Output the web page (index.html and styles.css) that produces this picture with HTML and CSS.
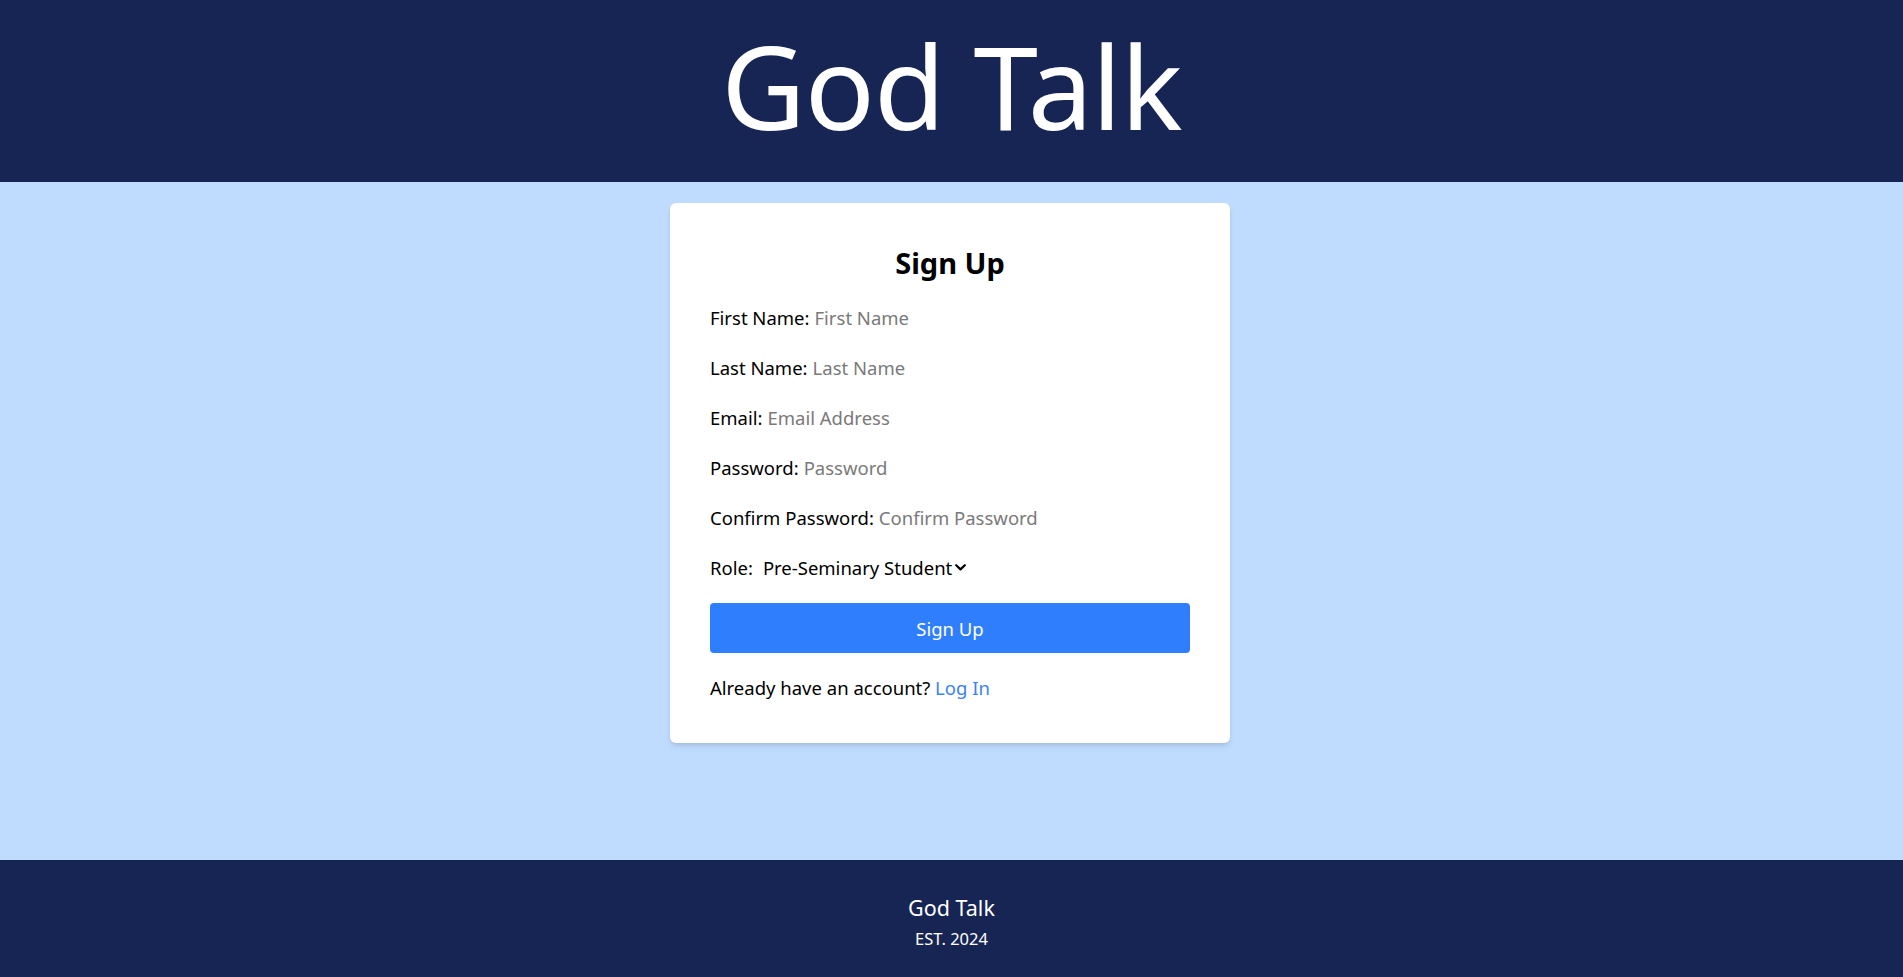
FILE: index.html
```html
<!DOCTYPE html>
<html lang="en">
<head>
    <meta charset="UTF-8">
    <meta name="viewport" content="width=device-width, initial-scale=1.0">
    <title>God Talk - Sign Up</title>
    <link rel="stylesheet" href="styles.css">
</head>
<body>

    <header class="site-header">
        <h1>God Talk</h1>
    </header>

    <main class="page">
        <form class="signup-card" onsubmit="return false;">
            <h2>Sign Up</h2>

            <label class="field"><span class="field-name">First Name:</span><input type="text" placeholder="First Name"></label>
            <label class="field"><span class="field-name">Last Name:</span><input type="text" placeholder="Last Name"></label>
            <label class="field"><span class="field-name">Email:</span><input type="email" placeholder="Email Address"></label>
            <label class="field"><span class="field-name">Password:</span><input type="password" placeholder="Password"></label>
            <label class="field"><span class="field-name">Confirm Password:</span><input type="password" placeholder="Confirm Password"></label>

            <label class="field role-field"><span class="field-name">Role:</span>
                <span class="select-wrap">
                    <select>
                        <option>Pre-Seminary Student</option>
                        <option>Seminary Student</option>
                        <option>Pastor</option>
                    </select>
                    <svg class="chevron" width="11" height="7" viewBox="0 0 11 7"><path d="M1.2 1.2 L5.5 5.4 L9.8 1.2" fill="none" stroke="#000" stroke-width="2.2" stroke-linecap="round" stroke-linejoin="round"/></svg>
                </span>
            </label>

            <button type="submit" class="signup-btn">Sign Up</button>

            <p class="login-line">Already have an account? <a href="#">Log In</a></p>
        </form>
    </main>

    <footer class="site-footer">
        <p class="footer-name">God Talk</p>
        <p class="footer-est">EST. 2024</p>
    </footer>

</body>
</html>
```

FILE: styles.css
```css
body {
    font-family: "Noto Sans", "Open Sans", sans-serif;
    margin: 0;
    min-height: 100vh;
    display: flex;
    flex-direction: column;
    color: #000;
}

.site-header {
    background-color: #172554;
    height: 182px;
    box-sizing: border-box;
    padding-top: 19px;
    text-align: center;
}

.site-header h1 {
    margin: 0;
    color: #fff;
    font-size: 116px;
    font-weight: 400;
    line-height: 132px;
    letter-spacing: -1px;
}

.page {
    flex: 1;
    background-color: #bfdbfe;
    display: flex;
    justify-content: center;
    align-items: flex-start;
    padding-top: 21px;
}

.signup-card {
    width: 560px;
    box-sizing: border-box;
    margin-right: 3px;
    background-color: #ffffff;
    padding: 40px;
    border-radius: 6px;
    box-shadow: 0 4px 6px -1px rgba(0, 0, 0, 0.1), 0 2px 4px -2px rgba(0, 0, 0, 0.1);
    display: flex;
    flex-direction: column;
    gap: 20px;
}

.signup-card h2 {
    margin: 0;
    text-align: center;
    font-size: 29px;
    font-weight: 700;
    line-height: 40px;
}

.field {
    font-size: 18.5px;
    line-height: 30px;
    height: 30px;
    display: flex;
    align-items: center;
}

.field-name {
    margin-right: 5px;
}

.field input {
    border: none;
    outline: none;
    padding: 0;
    margin: 0;
    font: inherit;
    flex: 1;
    min-width: 0;
    background: transparent;
}

.field input::placeholder {
    color: #7a7a7a;
}

.select-wrap {
    display: inline-flex;
    align-items: center;
    margin-left: 5px;
}

.select-wrap select {
    appearance: none;
    border: none;
    background: transparent;
    font: inherit;
    color: #000;
    padding: 0;
    margin: 0;
    outline: none;
}

.chevron {
    margin-left: 2px;
    margin-top: -2px;
}

.signup-btn {
    height: 50px;
    background-color: #2f7efe;
    color: #fff;
    border: none;
    border-radius: 4px;
    font-family: inherit;
    font-size: 18.5px;
    cursor: pointer;
}

.signup-btn:hover {
    background-color: #1f6ef0;
}

.login-line {
    margin: 0;
    font-size: 18.5px;
    line-height: 30px;
}

.login-line a {
    color: #3b82f6;
    text-decoration: none;
}

.site-footer {
    background-color: #172554;
    height: 117px;
    box-sizing: border-box;
    padding-top: 31px;
    text-align: center;
    color: #fff;
}

.site-footer p {
    margin: 0;
}

.footer-name {
    font-size: 21.5px;
    line-height: 34px;
}

.footer-est {
    font-size: 16.5px;
    line-height: 28px;
}
```
